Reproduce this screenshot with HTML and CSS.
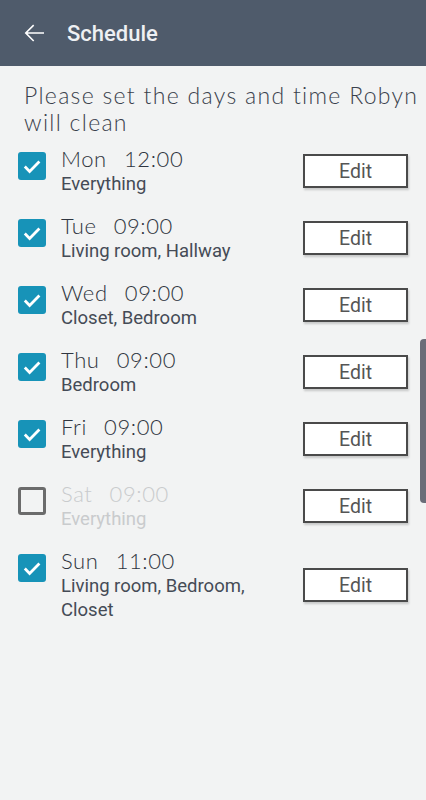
FILE: index.html
```
<!DOCTYPE html>
<html>
<head>
    <title>Schedule</title>
    <link rel="stylesheet" href="styles.css">
</head>
<body>
    <div class="app">
        <div class="toolbar">
            <svg class="back" width="30" height="30" viewBox="0 0 24 24"><path d="M20 11.4H6.9l5.3-5.3-.9-.9L4.5 12l6.8 6.8.9-.9-5.3-5.3H20z" fill="#fff"/></svg>
            <span class="toolbar-title">Schedule</span>
        </div>

        <p class="intro">Please set the days and time Robyn will clean</p>

        <div class="list">
            <div class="row">
                <span class="check on"><svg viewBox="0 0 24 24" width="24" height="24"><path d="M4.8 12.6l4.8 4.8L19.4 7.6" fill="none" stroke="#fff" stroke-width="2.8"/></svg></span>
                <div class="text">
                    <div class="title">Mon&nbsp; 12:00</div>
                    <div class="sub">Everything</div>
                </div>
                <button class="edit">Edit</button>
            </div>
            <div class="row">
                <span class="check on"><svg viewBox="0 0 24 24" width="24" height="24"><path d="M4.8 12.6l4.8 4.8L19.4 7.6" fill="none" stroke="#fff" stroke-width="2.8"/></svg></span>
                <div class="text">
                    <div class="title">Tue&nbsp; 09:00</div>
                    <div class="sub">Living room, Hallway</div>
                </div>
                <button class="edit">Edit</button>
            </div>
            <div class="row">
                <span class="check on"><svg viewBox="0 0 24 24" width="24" height="24"><path d="M4.8 12.6l4.8 4.8L19.4 7.6" fill="none" stroke="#fff" stroke-width="2.8"/></svg></span>
                <div class="text">
                    <div class="title">Wed&nbsp; 09:00</div>
                    <div class="sub">Closet, Bedroom</div>
                </div>
                <button class="edit">Edit</button>
            </div>
            <div class="row">
                <span class="check on"><svg viewBox="0 0 24 24" width="24" height="24"><path d="M4.8 12.6l4.8 4.8L19.4 7.6" fill="none" stroke="#fff" stroke-width="2.8"/></svg></span>
                <div class="text">
                    <div class="title">Thu&nbsp; 09:00</div>
                    <div class="sub">Bedroom</div>
                </div>
                <button class="edit">Edit</button>
            </div>
            <div class="row">
                <span class="check on"><svg viewBox="0 0 24 24" width="24" height="24"><path d="M4.8 12.6l4.8 4.8L19.4 7.6" fill="none" stroke="#fff" stroke-width="2.8"/></svg></span>
                <div class="text">
                    <div class="title">Fri&nbsp; 09:00</div>
                    <div class="sub">Everything</div>
                </div>
                <button class="edit">Edit</button>
            </div>
            <div class="row off">
                <span class="check"></span>
                <div class="text">
                    <div class="title">Sat&nbsp; 09:00</div>
                    <div class="sub">Everything</div>
                </div>
                <button class="edit">Edit</button>
            </div>
            <div class="row">
                <span class="check on"><svg viewBox="0 0 24 24" width="24" height="24"><path d="M4.8 12.6l4.8 4.8L19.4 7.6" fill="none" stroke="#fff" stroke-width="2.8"/></svg></span>
                <div class="text">
                    <div class="title">Sun&nbsp; 11:00</div>
                    <div class="sub">Living room, Bedroom, Closet</div>
                </div>
                <button class="edit">Edit</button>
            </div>
        </div>

        <div class="scrollbar"></div>
    </div>
</body>
</html>
```

FILE: styles.css
```
html, body { margin: 0; padding: 0; }

body {
    background: #f2f3f3;
    font-family: Roboto, "Liberation Sans", sans-serif;
}

.app {
    position: relative;
    width: 426px;
    min-height: 800px;
}

/* 顶部栏 */
.toolbar {
    height: 66px;
    background: #4f5b6b;
    display: flex;
    align-items: center;
    padding-left: 19px;
    box-sizing: border-box;
}

.back { display: block; }

.toolbar-title {
    color: #eef0f3;
    font-size: 22px;
    font-weight: 500;
    margin-left: 18px;
}

.intro {
    margin: 0 0 10px;
    padding: 16px 2px 0 24px;
    font-family: Lato, sans-serif;
    font-weight: 300;
    font-size: 23px;
    line-height: 27px;
    color: #3a414c;
    letter-spacing: 1.3px;
}

/* 列表 */
.row {
    display: flex;
    align-items: center;
    padding: 0 18px;
    margin-bottom: 17px;
}

.check {
    align-self: flex-start;
    margin-top: 6px;
    width: 28px;
    height: 28px;
    box-sizing: border-box;
    border-radius: 3px;
    border: 3px solid #6b6b6b;
    display: flex;
    align-items: center;
    justify-content: center;
    flex: none;
}

.check.on {
    background: #1793b8;
    border: none;
}

.text {
    flex: 1;
    margin-left: 15px;
}

.title {
    font-family: Lato, sans-serif;
    font-weight: 300;
    font-size: 22px;
    line-height: 26px;
    color: #2f3540;
    letter-spacing: 0.6px;
    word-spacing: 2px;
}

.sub {
    font-size: 18.5px;
    line-height: 24px;
    color: #454b56;
    padding-right: 30px;
}

.off .title, .off .sub { color: #c9cbcd; }

.edit {
    width: 105px;
    height: 34px;
    flex: none;
    background: #fff;
    border: 2px solid #4a4a4a;
    box-shadow: 1px 2px 2px rgba(0, 0, 0, 0.18);
    font-family: Roboto, sans-serif;
    font-size: 19.5px;
    color: #555;
    padding: 0;
}

.scrollbar {
    position: absolute;
    right: 0;
    top: 339px;
    width: 6px;
    height: 164px;
    background: #6a6d78;
    border-radius: 4px 0 0 4px;
}
```
